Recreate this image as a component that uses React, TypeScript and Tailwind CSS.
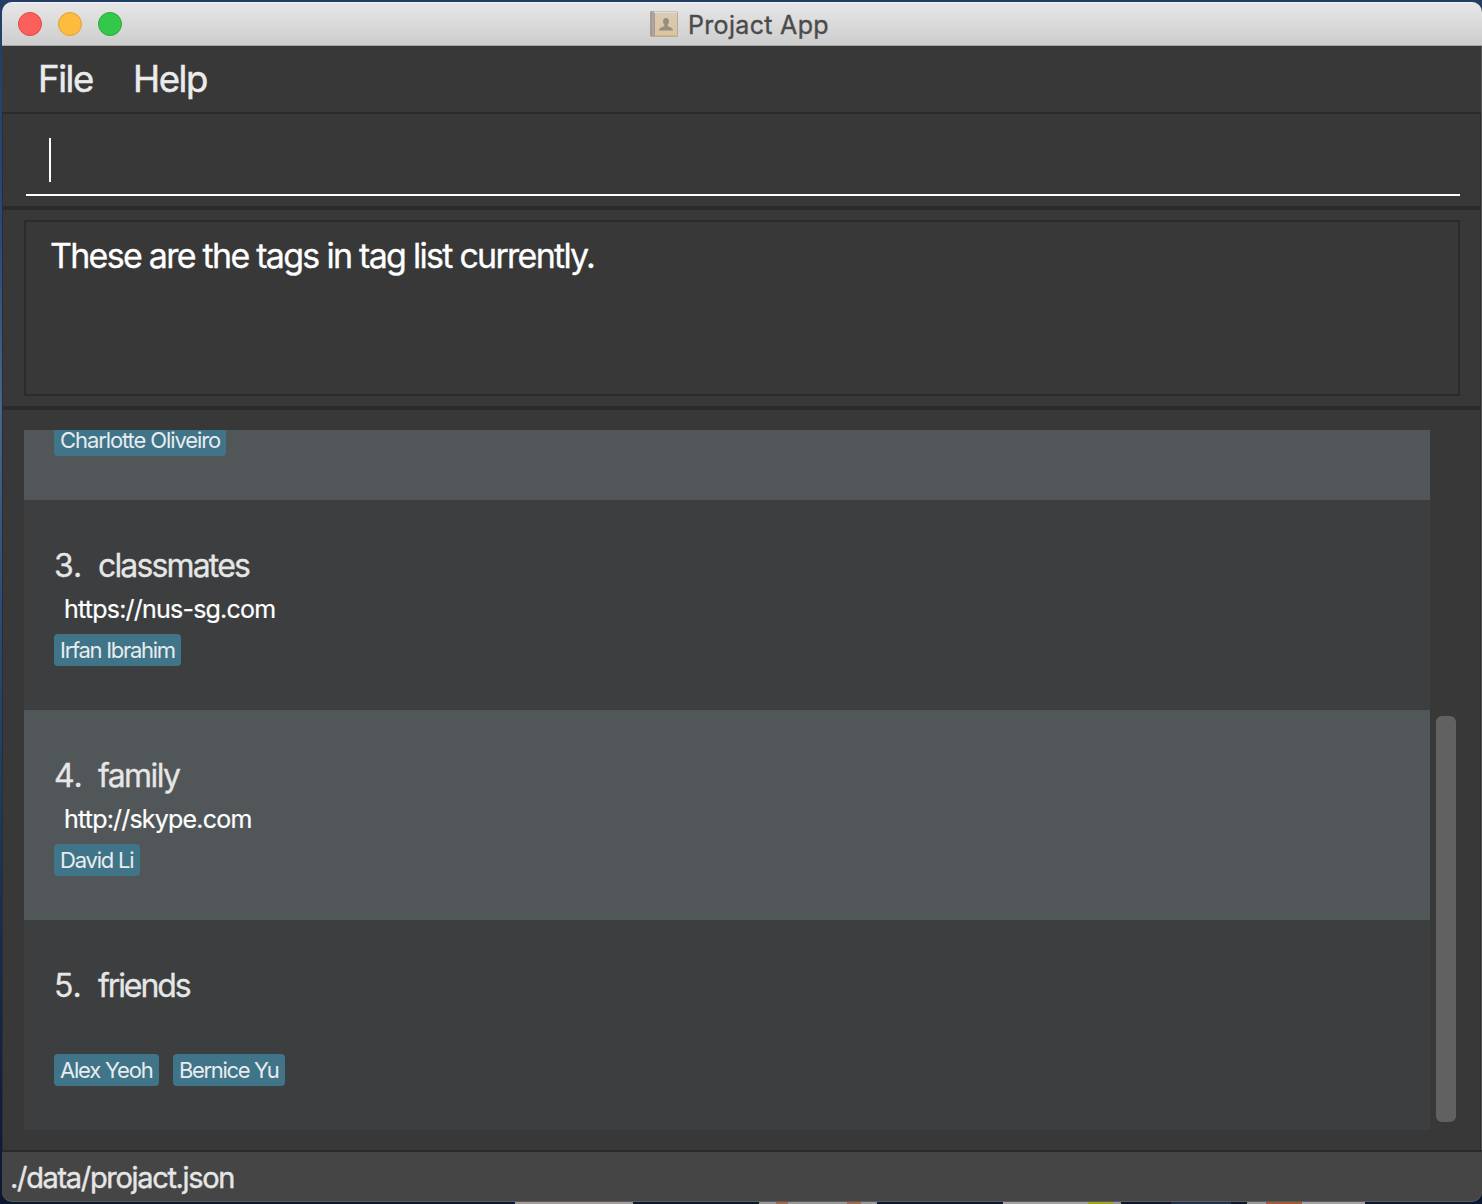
import React from 'react';

function Tag({ children, className = '' }: { children: string; className?: string }) {
  return (
    <span
      className={`flex h-[32px] shrink-0 items-center rounded-[4px] bg-[#3f7489] pl-[6px] text-[22px] leading-[32px] whitespace-nowrap text-[#e8ecee] ${className}`}
    >
      {children}
    </span>
  );
}

function Row({
  index,
  name,
  nameClass,
  url,
  urlClass = '',
  shade,
  children,
}: {
  index: number;
  name: string;
  nameClass: string;
  url?: string;
  urlClass?: string;
  shade: string;
  children: React.ReactNode;
}) {
  return (
    <div className={`flex h-[210px] shrink-0 flex-col pt-[44px] pl-[30px] ${shade}`}>
      <div className="flex h-[42px] text-[32px] leading-[44px] text-[#e6e6e6] [-webkit-text-stroke:0.3px]">
        <span className="w-[44px]">{index}.</span>
        <span className={nameClass}>{name}</span>
      </div>
      <div className={`h-[46px] pl-[10px] text-[25px] leading-[46px] text-white [-webkit-text-stroke:0.2px] ${urlClass}`}>{url}</div>
      <div className="mt-[2px] flex gap-[14px]">{children}</div>
    </div>
  );
}

function BookIcon() {
  return (
    <svg width="28" height="26" viewBox="0 0 28 26" className="mr-[10px]">
      <defs>
        <linearGradient id="cover" x1="0" y1="0" x2="0" y2="1">
          <stop offset="0" stopColor="#d8cbb6" />
          <stop offset="1" stopColor="#dcc49c" />
        </linearGradient>
      </defs>
      <rect x="0" y="0" width="28" height="26" rx="1.5" fill="#b9ab98" />
      <rect x="0" y="0.5" width="5" height="24.5" rx="1" fill="#a39b98" />
      <rect x="2.5" y="1" width="1" height="23.500" fill="#b8b0ac" />
      <rect x="5" y="2" width="22" height="22.500" fill="url(#cover)" />
      <rect x="4" y="0.5" width="23" height="1.5" fill="#e0dedb" />
      <path
        d="M16 7c1.900 0 3 1.300 3 3.200 0 1.500-.6 2.600-1.300 3.300v1.500c.6 1 5.300 1.200 5.300 4.500H9c0-3.300 4.700-3.500 5.300-4.500v-1.500c-.7-.7-1.300-1.800-1.300-3.300C13 8.300 14.100 7 16 7z"
        fill="#978d83"
      />
    </svg>
  );
}

export default function App() {
  return (
    <div className="flex h-[1204px] w-[1482px] flex-col overflow-hidden bg-[linear-gradient(to_bottom,#213d68_0%,#2b4a78_20%,#47658e_34%,#2d4b78_50%,#182f52_75%,#0b1830_100%)] pt-[2px] pl-[2px] font-[Inter,sans-serif]">
      <div className="flex h-[1200px] w-[1480px] flex-col overflow-hidden rounded-[10px] bg-[#555555]">
        <header className="flex h-[44px] shrink-0 items-center border-t border-b border-t-[#f4f4f4] border-b-[#a6a6a6] bg-linear-to-b from-[#e7e7e7] to-[#cdcdcd] pl-[16px]">
          <div className="flex gap-[16px]">
            <span className="size-[24px] rounded-full border border-[#e2463f] bg-[#fc605c]" />
            <span className="size-[24px] rounded-full border border-[#dfa033] bg-[#fdbc40]" />
            <span className="size-[24px] rounded-full border border-[#27aa35] bg-[#34c84a]" />
          </div>
          <div className="ml-[528px] flex items-center text-[25px] leading-[40px] text-[#4b4b4b]">
            <BookIcon />
            <h1 className="pt-[2px] tracking-[0.320px] [-webkit-text-stroke:0.35px]">Projact App</h1>
          </div>
        </header>

        <nav className="mr-px flex h-[68px] shrink-0 border-b-2 border-[#2a2a2a] bg-[#383838] pl-[36px] text-[36.500px] leading-[66px] text-[#ebebeb] [-webkit-text-stroke:0.5px]">
          <span className="w-[95px] tracking-[-1.400px]">File</span>
          <span className="tracking-[-1.400px]">Help</span>
        </nav>

        <main className="mr-px flex grow flex-col border-x border-[#2d2d2d] bg-[#383838]">
          <section className="h-[96px] shrink-0 border-b-4 border-[#2a2a2a] px-[23px]">
            <div className="h-[82px] w-[1434px] border-b-2 border-white pt-[24px] pl-[23px]">
              <div className="h-[44px] w-[2px] bg-white" />
            </div>
          </section>
          <section className="h-[200px] shrink-0 border-b-4 border-[#2a2a2a] pt-[10px] pl-[21px]">
            <div className="h-[176px] w-[1436px] border-2 border-[#2a2a2a] pt-[12px] pl-[24px] text-[34px] leading-[44px] tracking-[-1.730px] text-white [-webkit-text-stroke:0.3px]">
              These are the tags in tag list currently.
            </div>
          </section>
          <section className="flex h-[740px] shrink-0 pt-[20px] pl-[21px]">
            <div className="flex h-[700px] w-[1406px] flex-col">
              <div className="h-[70px] shrink-0 bg-[#515658] pl-[30px]">
                <div className="flex h-[26px] w-[172px] rounded-b-[4px] bg-[#3f7489] pl-[6px] text-[22px] leading-[20px] tracking-[-1.100px] whitespace-nowrap text-[#e8ecee]">
                  Charlotte Oliveiro
                </div>
              </div>
              <Row index={3} name="classmates" nameClass="tracking-[-1.850px]" url="https://nus-sg.com" urlClass="tracking-[-0.780px]" shade="bg-[#3c3e3f]">
                <Tag className="w-[127px] tracking-[-1.280px]">Irfan Ibrahim</Tag>
              </Row>
              <Row index={4} name="family" nameClass="tracking-[-1.600px]" url="http://skype.com" urlClass="tracking-[-0.800px]" shade="bg-[#515658]">
                <Tag className="w-[86px] tracking-[-1.200px]">David Li</Tag>
              </Row>
              <Row index={5} name="friends" nameClass="tracking-[-2.100px]" shade="bg-[#3c3e3f]">
                <Tag className="w-[105px] tracking-[-1.200px]">Alex Yeoh</Tag>
                <Tag className="w-[112px] tracking-[-1.350px]">Bernice Yu</Tag>
              </Row>
            </div>
            <div className="mt-[286px] ml-[6px] h-[406px] w-[20px] rounded-[6px] bg-[#616161]" />
          </section>
        </main>

        <footer className="h-[52px] shrink-0 rounded-b-[10px] border-t-2 border-b border-t-[#2a2a2a] border-b-[#5c5c5c] bg-[#454545] pl-[8px] text-[29px] leading-[52px] tracking-[-1.330px] text-[#e6e6e6] [-webkit-text-stroke:0.4px]">
          ./data/projact.json
        </footer>
      </div>
      <div className="flex h-[2px] shrink-0">
        <span className="ml-[513px] w-[118px] bg-[#a39c9a]" />
        <span className="ml-[126px] w-[17px] bg-[#999999]" />
        <span className="w-[12px] bg-[#a5694a]" />
        <span className="w-[59px] bg-[#999999]" />
        <span className="w-[14px] bg-[#a5694a]" />
        <span className="w-[16px] bg-[#999999]" />
        <span className="ml-[126px] w-[85px] bg-[#a3a3a3]" />
        <span className="w-[25px] bg-[#a5a21d]" />
        <span className="w-[8px] bg-[#999999]" />
        <span className="ml-[50px] w-[60px] bg-[#1d3250]" />
        <span className="ml-[16px] w-[19px] bg-[#999999]" />
        <span className="w-[36px] bg-[#a85b32]" />
        <span className="w-[63px] bg-[#a3a3a3]" />
      </div>
    </div>
  );
}
